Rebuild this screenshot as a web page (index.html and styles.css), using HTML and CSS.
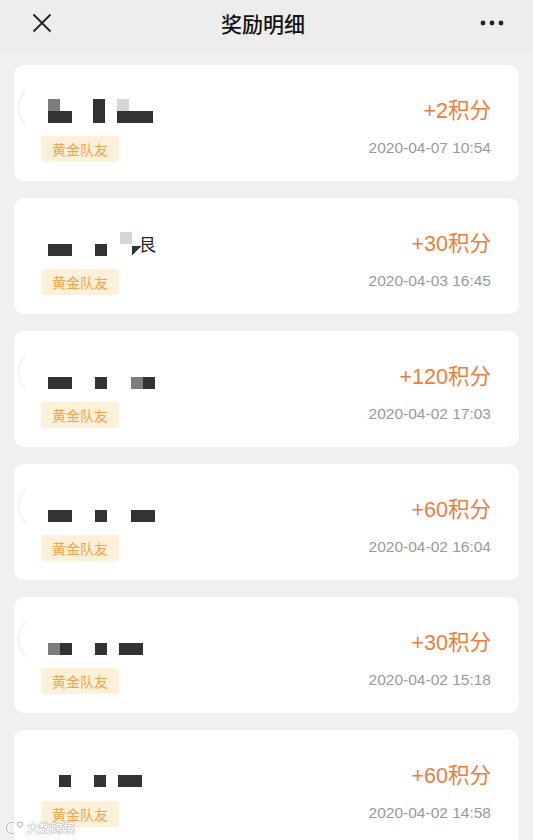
FILE: index.html
```html
<!DOCTYPE html>
<html lang="zh-CN">
<head>
    <meta charset="UTF-8" />
    <meta name="viewport" content="width=device-width, initial-scale=1.0" />
    <title>奖励明细</title>
    <link rel="stylesheet" href="styles.css">
</head>
<body>
    <div class="wrap-all">
        <header class="top-bar">
            <button class="bar-btn" aria-label="关闭">
                <svg width="20" height="20" viewBox="0 0 20 20"><path d="M1.5 1.5 L18.5 18.5 M18.5 1.5 L1.5 18.5" stroke="#222" stroke-width="1.8" fill="none"/></svg>
            </button>
            <h1 class="bar-title">奖励明细</h1>
            <button class="bar-btn more" aria-label="更多">
                <svg width="24" height="6" viewBox="0 0 24 6"><circle cx="3" cy="3" r="2.4" fill="#222"/><circle cx="12" cy="3" r="2.4" fill="#222"/><circle cx="21" cy="3" r="2.4" fill="#222"/></svg>
            </button>
        </header>

        <ul class="list">
            <li class="card ghost">
                <div class="row">
                    <div class="name"><i class="c tg bd"></i><i class="c bd"></i><i class="c td bd m21"></i><i class="c tl bd m12"></i><i class="c bd"></i><i class="c bd"></i></div>
                    <span class="points">+2积分</span>
                </div>
                <div class="row">
                    <span class="tag">黄金队友</span>
                    <span class="date">2020-04-07 10:54</span>
                </div>
            </li>
            <li class="card">
                <div class="row">
                    <div class="name"><i class="c bd"></i><i class="c bd"></i><i class="c bd m23"></i><i class="c tl m13"></i><i class="c nip"></i><span class="glyph">艮</span></div>
                    <span class="points">+30积分</span>
                </div>
                <div class="row">
                    <span class="tag">黄金队友</span>
                    <span class="date">2020-04-03 16:45</span>
                </div>
            </li>
            <li class="card ghost">
                <div class="row">
                    <div class="name"><i class="c bd"></i><i class="c bd"></i><i class="c bd m23"></i><i class="c bg m24"></i><i class="c bd"></i></div>
                    <span class="points">+120积分</span>
                </div>
                <div class="row">
                    <span class="tag">黄金队友</span>
                    <span class="date">2020-04-02 17:03</span>
                </div>
            </li>
            <li class="card ghost">
                <div class="row">
                    <div class="name"><i class="c bd"></i><i class="c bd"></i><i class="c bd m23"></i><i class="c bd m24"></i><i class="c bd"></i></div>
                    <span class="points">+60积分</span>
                </div>
                <div class="row">
                    <span class="tag">黄金队友</span>
                    <span class="date">2020-04-02 16:04</span>
                </div>
            </li>
            <li class="card ghost">
                <div class="row">
                    <div class="name"><i class="c bg"></i><i class="c bd"></i><i class="c bd m23"></i><i class="c bd m12"></i><i class="c bd"></i></div>
                    <span class="points">+30积分</span>
                </div>
                <div class="row">
                    <span class="tag">黄金队友</span>
                    <span class="date">2020-04-02 15:18</span>
                </div>
            </li>
            <li class="card">
                <div class="row">
                    <div class="name low"><i class="c bd m11"></i><i class="c bd m23"></i><i class="c bd m12"></i><i class="c bd"></i></div>
                    <span class="points">+60积分</span>
                </div>
                <div class="row">
                    <span class="tag">黄金队友</span>
                    <span class="date">2020-04-02 14:58</span>
                </div>
            </li>
        </ul>

        <div class="watermark">
            <svg width="20" height="14" viewBox="0 0 20 14"><path d="M9 2 A5.5 5.5 0 1 0 9 12" stroke="#fff" stroke-width="2.6" fill="none"/><path d="M9 2 A5.5 5.5 0 1 0 9 12" stroke="#999" stroke-width="0.8" fill="none"/><circle cx="15" cy="3.5" r="2.6" fill="#fff" stroke="#999" stroke-width="0.8"/></svg>
            <span>大数跨境</span>
        </div>
    </div>
</body>
</html>
```

FILE: styles.css
```css
html,
body {
    margin: 0;
    padding: 0;
    background-color: #f0f0f0;
    font-family: "Liberation Sans", "Noto Sans CJK SC", sans-serif;
}
ul {
    margin: 0;
    padding: 0;
    list-style: none;
}

.top-bar {
    display: flex;
    align-items: center;
    justify-content: space-between;
    height: 50px;
    padding: 0 29px 4px 22px;
    box-sizing: border-box;
    background-color: #ededed;
}
.bar-btn {
    display: flex;
    align-items: center;
    justify-content: center;
    width: 40px;
    height: 40px;
    padding: 0;
    border: 0;
    background: none;
}
.bar-btn.more {justify-content: flex-end;}
.bar-title {
    margin: 0;
    font-family: "Noto Sans CJK SC", sans-serif;
    font-size: 21px;
    font-weight: 500;
    color: #111;
}

.list {
    display: flex;
    flex-direction: column;
    gap: 17px;
    padding: 15px 14px 20px;
}
.card {
    position: relative;
    display: flex;
    flex-direction: column;
    gap: 13px;
    height: 116px;
    padding: 34px 28px 0 27px;
    box-sizing: border-box;
    background-color: #fff;
    border-radius: 10px;
    overflow: hidden;
}
/* 头像占位的淡色弧线 */
.card.ghost::before {
    content: "";
    position: absolute;
    left: 3px;
    top: 16px;
    width: 46px;
    height: 46px;
    border: 3px solid transparent;
    border-left-color: #f6f6f6;
    border-radius: 50%;
}
.row {
    display: flex;
    align-items: center;
    justify-content: space-between;
}

.name {
    display: flex;
    align-items: flex-end;
    height: 24px;
    margin-left: 7px;
}
.name.low {margin-top: -3px;}
.c {
    --t: transparent;
    --b: transparent;
    display: block;
    width: 12px;
    height: 24px;
    background: linear-gradient(to bottom, var(--t) 50%, var(--b) 50%);
}
.c.nip {
    width: 9px;
    background: linear-gradient(to top left, transparent 45%, #333 45%) no-repeat 0 14px / 9px 9px;
}
.tg {--t: #7d7d7d;}
.td {--t: #333;}
.tl {--t: #d6d6d6;}
.bd {--b: #333;}
.bg {--b: #7d7d7d;}
.m11 {margin-left: 11px;}
.m12 {margin-left: 12px;}
.m13 {margin-left: 13px;}
.m21 {margin-left: 21px;}
.m23 {margin-left: 23px;}
.m24 {margin-left: 24px;}
.glyph {
    margin-left: -2px;
    font-family: "Noto Sans CJK SC", sans-serif;
    font-size: 17px;
    line-height: 24px;
    color: #222;
}

.points {
    font-family: "Liberation Sans", "Noto Sans CJK SC", sans-serif;
    font-size: 21.5px;
    line-height: 24px;
    color: #f07c3a;
}
.tag {
    display: inline-block;
    height: 26px;
    padding: 0 11px;
    line-height: 26px;
    font-family: "Noto Sans CJK SC", sans-serif;
    font-size: 14px;
    color: #f5a449;
    background-color: #fff0da;
    border-radius: 3px;
}
.date {
    margin-top: -2px;
    font-size: 15.5px;
    color: #9a9a9a;
}

.watermark {
    position: fixed;
    left: 5px;
    bottom: 4px;
    display: flex;
    align-items: center;
    gap: 2px;
    font-family: "Noto Sans CJK SC", sans-serif;
    font-size: 12px;
    font-weight: 700;
    color: #fff;
    text-shadow: 0 0 1px #888, 0 0 1px #888;
}
```
